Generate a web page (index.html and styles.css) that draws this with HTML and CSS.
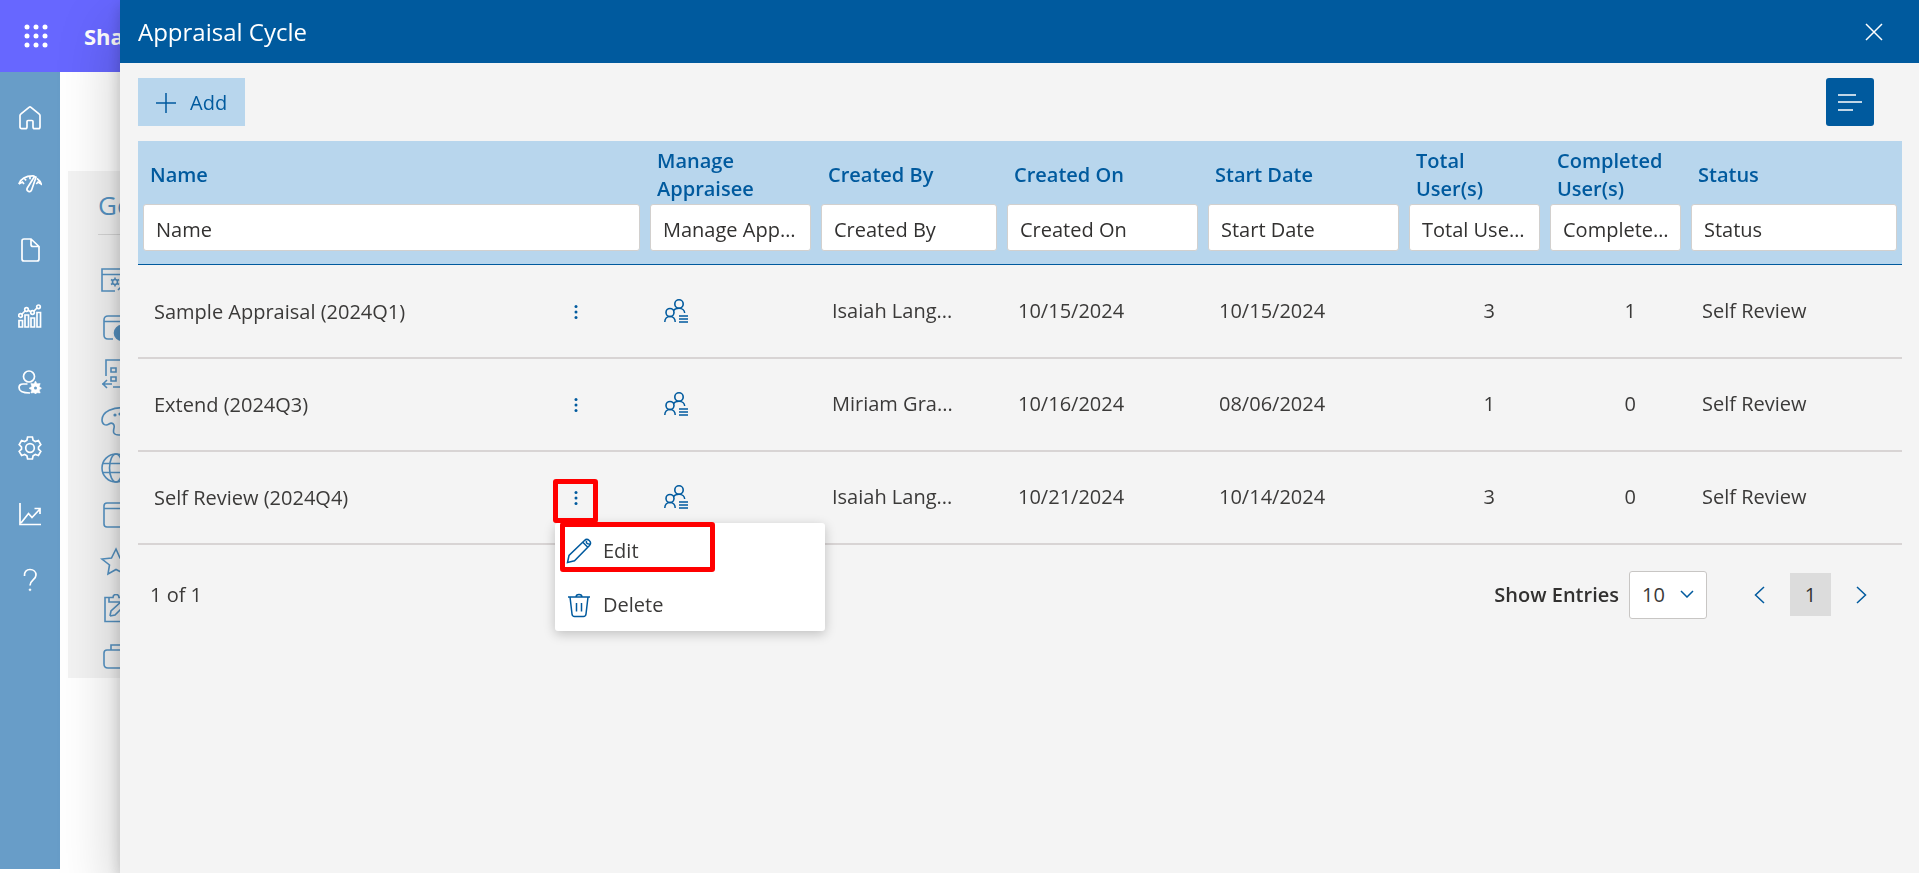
FILE: index.html
```html
<!DOCTYPE html>
<html lang="en">
<head>
<meta charset="utf-8">
<title>Appraisal Cycle</title>
<link rel="stylesheet" href="styles.css">
</head>
<body>
<svg class="sprite" aria-hidden="true">
  <symbol id="people-list" viewBox="0 0 24 24"><g fill="none" stroke="currentColor" stroke-width="1.6"><circle cx="15" cy="5" r="4.200"/><circle cx="6" cy="13.500" r="4"/><path d="M.8 23c0-3 2-5.500 5.200-5.500s5.200 2.500 5.200 5.500M9.500 11.500C10.500 10 12.500 9.200 15 9.200c3 0 5.500 2 5.700 4.800M15 17h9M15 20h9M15 23h9"/></g></symbol>
  <symbol id="dots" viewBox="0 0 4 16"><g fill="currentColor"><circle cx="2" cy="2.500" r="1.500"/><circle cx="2" cy="8" r="1.500"/><circle cx="2" cy="13.500" r="1.500"/></g></symbol>
</svg>

<header class="suite-bar">
  <button class="launcher" aria-label="App launcher">
    <svg width="24" height="24" viewBox="0 0 24 24" fill="currentColor"><circle cx="3" cy="3" r="2.500"/><circle cx="12" cy="3" r="2.500"/><circle cx="21" cy="3" r="2.500"/><circle cx="3" cy="12" r="2.500"/><circle cx="12" cy="12" r="2.500"/><circle cx="21" cy="12" r="2.500"/><circle cx="3" cy="21" r="2.500"/><circle cx="12" cy="21" r="2.500"/><circle cx="21" cy="21" r="2.500"/></svg>
  </button>
  <span class="suite-name">Sha</span>
</header>

<div class="workspace">
  <nav class="rail" aria-label="Main">
    <a href="#" aria-label="Home"><svg viewBox="0 0 24 24"><path d="M2 9.500C2 9 2.300 8.500 2.700 8.200L11 1.400a1.600 1.600 0 0 1 2 0l8.300 6.800c.4.300.7.800.7 1.300V21c0 1-.7 1.700-1.700 1.700H16.700c-1 0-1.700-.7-1.700-1.700v-5.500c0-.6-.4-1-1-1h-4c-.6 0-1 .4-1 1V21c0 1-.7 1.700-1.700 1.700H3.700C2.700 22.700 2 22 2 21z"/></svg></a>
    <a href="#" aria-label="Dashboard"><svg viewBox="0 0 24 24"><path d="M.8 12C3 6.500 8 3.500 16.500 4M.8 12l3.700-2 1.500 2M6 5.500l2 3M12 3.800v3.500M16.500 4.500L9.300 16a2.300 2.300 0 0 0 4.200 2.200L18 5.200zM19 6.500c2 1.500 3.500 3.200 4.200 5.500L20 10l-1.700 2"/></svg></a>
    <a href="#" aria-label="Documents"><svg viewBox="0 0 24 24"><path d="M13 1H6C4.500 1 4 1.700 4 3v18c0 1.300.7 2 2 2h13c1.300 0 2-.7 2-2V8.500zM13 1v5.500c0 1.300.7 2 2 2h6"/></svg></a>
    <a href="#" aria-label="Reports"><svg viewBox="0 0 24 24"><path d="M1 16.500h3.500V23H1zM7 11h3.500v12H7zM13 14h3.500v9H13zM19 8.500h3.500V23H19zM4 10l3-3M10 6l3 2M16 7l3-3"/><circle cx="2.500" cy="11.500" r="1.800"/><circle cx="8.500" cy="5.500" r="1.800"/><circle cx="14.500" cy="8.500" r="1.800"/><circle cx="20.500" cy="2.800" r="1.800"/></svg></a>
    <a href="#" aria-label="User settings"><svg viewBox="0 0 24 24"><circle cx="11" cy="6.500" r="5.500"/><path d="M9.500 14H5c-2.500 0-4 1.700-4 3.500C1 21 5.500 23 12 23"/><path class="solid" d="M17.500 11l1.500 2.800 3.200-.3-1 3 2.300 1.700-2.300 1.800 1 3-3.200-.3-1.500 1.300-1.500-1.300-3.200.3 1-3-2.800-1.800 2.800-1.700-1-3 3.200.3z"/><circle class="hole" cx="17.500" cy="18" r="1.500"/></svg></a>
    <a href="#" aria-label="Settings"><svg viewBox="0 0 24 24"><path d="M9.600 1h4.800l.7 3.200 2.200 1.300 3.100-1L22.800 8.700 20.500 11v2.200l2.300 2.200-2.400 4.100-3.100-1-2.200 1.300-.7 3.200H9.600l-.7-3.200-2.200-1.300-3.100 1-2.400-4.100 2.300-2.200V11L1.200 8.700l2.400-4.200 3.100 1 2.200-1.300z"/><circle cx="12" cy="12" r="4.300"/></svg></a>
    <a href="#" aria-label="Trends"><svg viewBox="0 0 24 24"><path d="M2 1v21.500h21M3 21l7.500-9.500 3.500 4 8-8.500M16.500 6.500H22V12"/></svg></a>
    <a href="#" aria-label="Help"><svg viewBox="0 0 24 24"><path d="M6.500 8C6 4 8.500 1.500 12 1.500s6 2.200 6 5.500c0 5-6 5-6 10.500"/><circle class="solid" cx="12" cy="21.800" r="1"/></svg></a>
  </nav>
  <main class="backdrop">
    <section class="settings-card">
      <h2>Ge</h2>
      <ul>
        <li><svg viewBox="0 0 30 30"><path d="M17 26H4V4h26M4 9.500h26"/><circle cx="17" cy="17" r="2.500"/><path d="M17 12.500v2M17 19.500v2M13 14.500l2 1.200M19 18.300l2 1.200M13 19.500l2-1.200M19 15.700l2-1.200M20 25l3-3"/></svg></li>
        <li><svg viewBox="0 0 30 30"><path d="M15 27H10c-3 0-4-1.500-4-4V8c0-2.500 1.500-4 4-4h20M6 9.500h24"/><circle class="dot" cx="24" cy="21" r="7.500"/></svg></li>
        <li><svg viewBox="0 0 30 30"><path d="M8 17V1h22M15 28h15M13 9h5v4h-5zM13 18h5v4h-5zM22 11h8M22 20h8M14 25H4M9 21l-4 4 4 4"/></svg></li>
        <li><svg viewBox="0 0 30 30"><path d="M29 2C15 0 4 6 4 14c0 5 4 6 7 4s6 0 5 4-1 7 5 7h8"/><circle cx="17" cy="9" r=".8"/><circle cx="22" cy="8" r=".8"/></svg></li>
        <li><svg viewBox="0 0 30 30"><circle cx="18" cy="15" r="14"/><ellipse cx="18" cy="15" rx="6.500" ry="14"/><path d="M4.500 10.500h27M4.500 19.500h27"/></svg></li>
        <li><svg viewBox="0 0 30 30"><path d="M30 3H9C7 3 6 4 6 6v18c0 2 1 3 3 3h21M6 8.500h24"/></svg></li>
        <li><svg viewBox="0 0 30 30"><path d="M18 2l4 9 9 .500-7 6 2 9-8-4-8 4.500 1.500-9L4 12l9.500-1z"/></svg></li>
        <li><svg viewBox="0 0 30 30"><path d="M11 3.500H7v24h23M11 3.500V8h19M11 3.500h4c0-4 6-4 6 0h6M12 22l1-5L25 6M12 22l5-1L29 9"/></svg></li>
        <li><svg viewBox="0 0 30 30"><path d="M30 9H9c-2 0-3 1-3 3v11c0 2.500 1 4 4 4h20M13 9V4h17"/></svg></li>
      </ul>
    </section>
  </main>
</div>

<section class="drawer" role="dialog" aria-labelledby="drawer-title">
  <header class="drawer-head">
    <h1 id="drawer-title">Appraisal Cycle</h1>
    <button class="close" aria-label="Close"><svg width="18" height="18" viewBox="0 0 18 18"><path d="M1 1l16 16M17 1L1 17"/></svg></button>
  </header>
  <div class="drawer-body">
    <div class="toolbar">
      <button class="add"><svg width="20" height="20" viewBox="0 0 20 20"><path d="M10 0v20M0 10h20"/></svg>Add</button>
      <button class="view" aria-label="Toggle view"><svg width="26" height="20" viewBox="0 0 26 20"><path d="M1 3h18M1 10h24M1 18h15"/></svg></button>
    </div>

    <table class="grid">
      <colgroup><col><col class="c-manage"><col class="c-by"><col class="c-on"><col class="c-start"><col class="c-count"><col class="c-count"><col class="c-status"></colgroup>
      <thead>
        <tr class="titles">
          <th scope="col">Name</th><th scope="col">Manage Appraisee</th><th scope="col">Created By</th><th scope="col">Created On</th><th scope="col">Start Date</th><th scope="col">Total User(s)</th><th scope="col">Completed User(s)</th><th scope="col">Status</th>
        </tr>
        <tr class="filters">
          <td><input type="text" placeholder="Name" aria-label="Name"></td>
          <td><input type="text" placeholder="Manage Appraisee" aria-label="Manage Appraisee"></td>
          <td><input type="text" placeholder="Created By" aria-label="Created By"></td>
          <td><input type="text" placeholder="Created On" aria-label="Created On"></td>
          <td><input type="text" placeholder="Start Date" aria-label="Start Date"></td>
          <td><input type="text" placeholder="Total User(s)" aria-label="Total User(s)"></td>
          <td><input type="text" placeholder="Completed User(s)" aria-label="Completed User(s)"></td>
          <td><input type="text" placeholder="Status" aria-label="Status"></td>
        </tr>
      </thead>
      <tbody>
        <tr>
          <td><div class="name-cell">Sample Appraisal (2024Q1)<div class="actions"><button class="more" aria-label="More actions"><svg width="4" height="16"><use href="#dots"/></svg></button></div></div></td>
          <td><button class="manage" aria-label="Manage appraisee"><svg width="24" height="24"><use href="#people-list"/></svg></button></td>
          <td>Isaiah Lang...</td><td>10/15/2024</td><td>10/15/2024</td><td class="num">3</td><td class="num">1</td><td>Self Review</td>
        </tr>
        <tr>
          <td><div class="name-cell">Extend (2024Q3)<div class="actions"><button class="more" aria-label="More actions"><svg width="4" height="16"><use href="#dots"/></svg></button></div></div></td>
          <td><button class="manage" aria-label="Manage appraisee"><svg width="24" height="24"><use href="#people-list"/></svg></button></td>
          <td>Miriam Gra...</td><td>10/16/2024</td><td>08/06/2024</td><td class="num">1</td><td class="num">0</td><td>Self Review</td>
        </tr>
        <tr>
          <td><div class="name-cell">Self Review (2024Q4)<div class="actions">
            <button class="more marked" aria-label="More actions"><svg width="4" height="16"><use href="#dots"/></svg></button>
            <div class="menu" role="menu">
              <button class="marked" role="menuitem"><svg width="26" height="26" viewBox="0 0 26 26"><path d="M1.500 24.500l1.500-7L18.500 2.500c3-3 8 1.500 5 5L8.500 22.800zM16.800 4.200l5 5M20.500 3c-.5 2 .5 3 3 3"/></svg>Edit</button>
              <button role="menuitem"><svg width="26" height="26" viewBox="0 0 26 26"><path d="M2 5h22M4 5l2 17c.2 1.700 1 2.500 2.500 2.500h9c1.500 0 2.300-.8 2.500-2.500l2-17M10 5c0-3.500 6-3.500 6 0M10.500 11v8.500M15.500 11v8.500"/></svg>Delete</button>
            </div>
          </div></div></td>
          <td><button class="manage" aria-label="Manage appraisee"><svg width="24" height="24"><use href="#people-list"/></svg></button></td>
          <td>Isaiah Lang...</td><td>10/21/2024</td><td>10/14/2024</td><td class="num">3</td><td class="num">0</td><td>Self Review</td>
        </tr>
      </tbody>
    </table>

    <footer class="pager">
      <span>1 of 1</span>
      <div class="pager-controls">
        <label for="entries">Show Entries</label>
        <span class="select-box">
          <select id="entries"><option>10</option></select>
          <svg width="14" height="8" viewBox="0 0 14 8"><path d="M1 1l6 6 6-6"/></svg>
        </span>
        <div class="pages">
          <button aria-label="Previous page"><svg width="11" height="18" viewBox="0 0 11 18"><path d="M10 1L1.500 9l8.500 8"/></svg></button>
          <button class="current" aria-current="page">1</button>
          <button aria-label="Next page"><svg width="11" height="18" viewBox="0 0 11 18"><path d="M1 1l8.500 8L1 17"/></svg></button>
        </div>
      </div>
    </footer>
  </div>
</section>
</body>
</html>
```
FILE: styles.css
```css
* { box-sizing: border-box; }

body {
  margin: 0;
  min-height: 100vh;
  display: flex;
  flex-direction: column;
  overflow: hidden;
  background: #fff;
  color: #3b3a39;
  font: 20px/28px "Segoe UI", "Open Sans", "Noto Sans", sans-serif;
}

button, input, select { font: inherit; color: inherit; }
button { border: 0; padding: 0; background: none; cursor: pointer; }
svg { display: block; flex: none; }
svg path { fill: none; stroke: currentColor; stroke-width: 1.5; }
.sprite { position: absolute; width: 0; height: 0; }

/* Page under the drawer */
.suite-bar {
  display: flex;
  align-items: center;
  height: 72px;
  gap: 24px;
  background: #6767ff;
  color: #fff;
}
.launcher { display: flex; justify-content: center; width: 60px; padding-left: 11px; color: #fff; }
.suite-name { font-size: 22px; font-weight: 700; }

.workspace { display: flex; flex: 1; }
.rail {
  display: flex;
  flex-direction: column;
  width: 60px;
  margin-bottom: 4px;
  padding-top: 13px;
  background: #689dc8;
}
.rail a { display: flex; align-items: center; justify-content: center; height: 66px; color: #fff; }
.rail svg { width: 24px; height: 24px; }
.rail path, .rail circle { fill: none; stroke: currentColor; stroke-width: 1.7; }
.rail .solid { fill: currentColor; stroke-width: 0.5; }
.rail .hole { fill: #689dc8; stroke: none; }

.backdrop { flex: 1; padding: 99px 8px 0; }
.settings-card { padding: 18px 30px 0; height: 507px; background: #f3f3f3; color: #5592c2; }
.settings-card h2 {
  margin: 0;
  padding-bottom: 12px;
  border-bottom: 1px solid #d6d6d6;
  font-size: 26px;
  line-height: 33px;
  font-weight: 400;
}
.settings-card ul { margin: 0; padding: 21px 0 0; list-style: none; }
.settings-card li { display: flex; align-items: center; height: 47px; }
.settings-card svg { width: 30px; height: 30px; }
.settings-card path, .settings-card circle, .settings-card ellipse { fill: none; stroke: currentColor; stroke-width: 1.6; }
.settings-card .dot { fill: currentColor; }

/* Drawer */
.drawer {
  position: fixed;
  inset: 0 0 0 120px;
  background: #f4f4f4;
  box-shadow: 0 26px 58px rgba(0, 0, 0, 0.22), 0 5px 14px rgba(0, 0, 0, 0.18);
}
.drawer-head {
  display: flex;
  align-items: center;
  justify-content: space-between;
  height: 63px;
  padding: 0 36px 0 18px;
  background: #005a9e;
  color: #fff;
}
.drawer-head h1 { margin: 0; font-size: 24px; font-weight: 400; line-height: 32px; }
.close { color: #fff; }
.drawer-body { padding: 15px 17px 0 18px; }

.toolbar { display: flex; justify-content: space-between; padding: 0 28px 15px 0; }
.toolbar button { display: flex; align-items: center; height: 48px; }
.add { gap: 14px; padding: 2px 18px 0; background: #b8d6ed; color: #005a9e; }
.view { justify-content: center; width: 48px; border-radius: 3px; background: #005a9e; color: #fff; }

.grid { width: 100%; table-layout: fixed; border-collapse: collapse; }
.c-manage { width: 171px; }
.c-by { width: 186px; }
.c-on { width: 201px; }
.c-start { width: 201px; }
.c-count { width: 141px; }
.c-status { width: 216px; }
.grid thead { background: #b8d6ed; color: #005a9e; border-bottom: 1px solid #005a9e; }
.titles th { height: 63px; padding: 6px 12px 1px; text-align: left; font-weight: 600; }
.filters td { padding: 0 5px 13px; }
.filters input {
  display: block;
  width: 100%;
  height: 47px;
  padding: 4px 10px 0 12px;
  border: 1px solid #d2d0ce;
  border-radius: 3px;
  background: #fff;
  color: #323130;
  text-overflow: ellipsis;
}
.filters input::placeholder { color: #323130; opacity: 1; }
.grid tbody td { height: 93px; padding: 0 16px; border-bottom: 2px solid #d8d4d4; white-space: nowrap; }
.grid tbody .num { padding-right: 50px; text-align: right; }
.name-cell { display: flex; align-items: center; justify-content: space-between; padding: 2px 36px 0 0; }
.actions { position: relative; }
.more { display: flex; align-items: center; justify-content: center; width: 35px; height: 34px; color: #005a9e; }
.manage { display: block; color: #005a9e; padding: 0 3px; }

/* Red frames around the marked controls */
.marked { position: relative; }
.marked::after { content: ""; position: absolute; border: 5px solid #f00; border-radius: 3px; pointer-events: none; }
.more.marked::after { inset: -2px -5px -8px; z-index: 2; }

.menu {
  position: absolute;
  top: 42px;
  left: -3px;
  z-index: 1;
  width: 270px;
  background: #fff;
  border-radius: 3px;
  box-shadow: 0 3px 12px rgba(0, 0, 0, 0.22);
}
.menu button { display: flex; align-items: center; gap: 11px; width: 100%; height: 54px; padding: 2px 11px 0; }
.menu svg { color: #005a9e; }
.menu .marked::after { inset: -1px 110px 5px 5px; }

.pager { display: flex; align-items: center; justify-content: space-between; padding: 26px 20px 0 12px; }
.pager-controls, .pages { display: flex; align-items: center; }
.pager-controls label { font-weight: 600; margin-right: 10px; color: #323130; }
.select-box { position: relative; }
.select-box select {
  appearance: none;
  width: 78px;
  height: 48px;
  padding: 0 12px;
  border: 1px solid #c8c6c4;
  border-radius: 3px;
  background: #fff;
}
.select-box svg { position: absolute; top: 19px; right: 13px; color: #005a9e; pointer-events: none; }
.pages { gap: 10px; margin-left: 32px; }
.pages button { display: flex; align-items: center; justify-content: center; width: 41px; height: 43px; color: #005a9e; }
.pages .current { background: #dcdcdc; color: #323130; }
```
